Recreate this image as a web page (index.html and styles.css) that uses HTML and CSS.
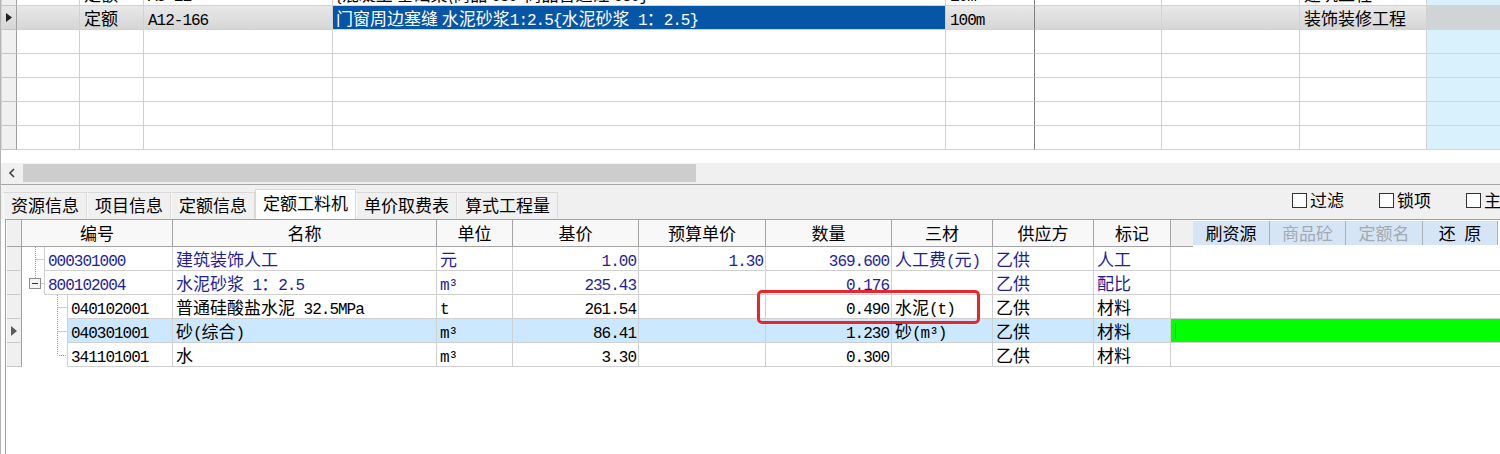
FILE: index.html
```html
<!DOCTYPE html>
<html lang="zh">
<head>
<meta charset="utf-8">
<link rel="stylesheet" href="styles.css">
</head>
<body>
<div class="app">
  <div class="top-grid">
    <div class="trow">
      <div class="ind"></div><div></div><div>定额</div><div><span class="m">A5-11</span></div>
      <div class="name">{混凝土 基础梁(商品 <span class="m">C30</span>&nbsp; 商品普通砼 <span class="m">C30}</span></div>
      <div class="frz"><span class="m">10m³</span></div><div></div><div></div><div>建筑工程</div><div class="blue"></div>
    </div>
    <div class="trow sel">
      <div class="ind"><svg width="6" height="9" viewBox="0 0 6 9"><path d="M0 0L6 4.5L0 9Z" fill="#202020"/></svg></div>
      <div></div><div>定额</div><div><span class="m">A12-166</span></div>
      <div class="name">门窗周边塞缝 水泥砂浆<span class="m">1:2.5{</span>水泥砂浆<span class="m"> 1</span>：<span class="m">2.5}</span></div>
      <div class="frz"><span class="m">100m</span></div><div></div><div></div><div>装饰装修工程</div><div class="blue"></div>
    </div>
    <div class="trow"><div class="ind"></div><div></div><div></div><div></div><div class="name"></div><div class="frz"></div><div></div><div></div><div></div><div class="blue"></div></div>
    <div class="trow"><div class="ind"></div><div></div><div></div><div></div><div class="name"></div><div class="frz"></div><div></div><div></div><div></div><div class="blue"></div></div>
    <div class="trow"><div class="ind"></div><div></div><div></div><div></div><div class="name"></div><div class="frz"></div><div></div><div></div><div></div><div class="blue"></div></div>
    <div class="trow"><div class="ind"></div><div></div><div></div><div></div><div class="name"></div><div class="frz"></div><div></div><div></div><div></div><div class="blue"></div></div>
    <div class="trow"><div class="ind"></div><div></div><div></div><div></div><div class="name"></div><div class="frz"></div><div></div><div></div><div></div><div class="blue"></div></div>
  </div>

  <div class="hscroll">
    <div class="arrow"><svg width="8" height="10" viewBox="0 0 8 10"><path d="M6 1L2 5L6 9" fill="none" stroke="#404040" stroke-width="1.6"/></svg></div>
    <div class="thumb"></div>
  </div>

  <div class="tabstrip">
    <div class="tabs">
      <div class="tab">资源信息</div>
      <div class="tab">项目信息</div>
      <div class="tab">定额信息</div>
      <div class="tab active">定额工料机</div>
      <div class="tab">单价取费表</div>
      <div class="tab">算式工程量</div>
    </div>
    <div class="checks">
      <label class="chk"><span class="box"></span>过滤</label>
      <label class="chk"><span class="box"></span>锁项</label>
      <label class="chk"><span class="box"></span>主材</label>
    </div>
  </div>

  <div class="panel">
    <div class="ghead">
      <div class="ind"></div>
      <div>编号</div><div>名称</div><div>单位</div><div>基价</div><div>预算单价</div><div>数量</div><div>三材</div><div>供应方</div><div>标记</div>
      <div class="blank"></div>
      <div class="btns">
        <div class="btn">刷资源</div>
        <div class="btn dis">商品砼</div>
        <div class="btn dis">定额名</div>
        <div class="btn">还&ensp;原</div>
      </div>
    </div>

    <div class="brow blue">
      <div class="ind"></div>
      <div class="codec"><svg class="tree" width="22" height="24" viewBox="0 0 22 24"><path d="M13.5 0V24M13.5 12.5H22" stroke="#9a9a9a" stroke-dasharray="1 1"/></svg><div class="code"><span class="m">000301000</span></div></div>
      <div>建筑装饰人工</div><div>元</div>
      <div class="r"><span class="m">1.00</span></div><div class="r"><span class="m">1.30</span></div><div class="r"><span class="m">369.600</span></div>
      <div>人工费<span class="m">(</span>元<span class="m">)</span></div><div>乙供</div><div>人工</div><div class="rest"></div>
    </div>
    <div class="brow blue">
      <div class="ind"></div>
      <div class="codec"><svg class="tree" width="22" height="24" viewBox="0 0 22 24"><path d="M13.5 0V7M18.5 12.5H22" stroke="#9a9a9a" stroke-dasharray="1 1"/><rect x="7.5" y="7.5" width="11" height="10" fill="#f4f4f4" stroke="#8c8c8c"/><path d="M10 12.5H16" stroke="#303030"/></svg><div class="code"><span class="m">800102004</span></div></div>
      <div>水泥砂浆<span class="m"> 1</span>：<span class="m">2.5</span></div><div><span class="m">m³</span></div>
      <div class="r"><span class="m">235.43</span></div><div class="r"></div><div class="r"><span class="m">0.176</span></div>
      <div></div><div>乙供</div><div>配比</div><div class="rest"></div>
    </div>
    <div class="brow">
      <div class="ind"></div>
      <div class="codec"><svg class="tree" width="45" height="24" viewBox="0 0 45 24"><path d="M35.5 0V24M35.5 12.5H45" stroke="#9a9a9a" stroke-dasharray="1 1"/></svg><div class="code"><span class="m">040102001</span></div></div>
      <div>普通硅酸盐水泥<span class="m"> 32.5MPa</span></div><div><span class="m">t</span></div>
      <div class="r"><span class="m">261.54</span></div><div class="r"></div><div class="r"><span class="m">0.490</span></div>
      <div>水泥<span class="m">(t)</span></div><div>乙供</div><div>材料</div><div class="rest"></div>
    </div>
    <div class="brow sel">
      <div class="ind"><svg width="6" height="10" viewBox="0 0 6 10"><path d="M0 0L6 5L0 10Z" fill="#5a5a5a"/></svg></div>
      <div class="codec"><svg class="tree" width="45" height="24" viewBox="0 0 45 24"><path d="M35.5 0V24M35.5 12.5H45" stroke="#9a9a9a" stroke-dasharray="1 1"/></svg><div class="code"><span class="m">040301001</span></div></div>
      <div>砂<span class="m">(</span>综合<span class="m">)</span></div><div><span class="m">m³</span></div>
      <div class="r"><span class="m">86.41</span></div><div class="r"></div><div class="r"><span class="m">1.230</span></div>
      <div>砂<span class="m">(m³)</span></div><div>乙供</div><div>材料</div><div class="rest green"><span class="caret"></span></div>
    </div>
    <div class="brow">
      <div class="ind"></div>
      <div class="codec"><svg class="tree" width="45" height="24" viewBox="0 0 45 24"><path d="M35.5 0V12.5H45" fill="none" stroke="#9a9a9a" stroke-dasharray="1 1"/></svg><div class="code"><span class="m">341101001</span></div></div>
      <div>水</div><div><span class="m">m³</span></div>
      <div class="r"><span class="m">3.30</span></div><div class="r"></div><div class="r"><span class="m">0.300</span></div>
      <div></div><div>乙供</div><div>材料</div><div class="rest"></div>
    </div>

    <div class="redbox"></div>
  </div>
</div>
</body>
</html>
```

FILE: styles.css
```css
* { box-sizing: border-box; margin: 0; padding: 0; }
html, body { width: 1500px; height: 454px; overflow: hidden; background: #fff; }
body {
  font-family: "Noto Sans CJK SC", "Liberation Sans", sans-serif;
  font-size: 17px;
  color: #000;
}
.m {
  font-family: "Liberation Mono", "DejaVu Sans Mono", monospace;
  font-size: 16px;
  letter-spacing: -1px;
}

.app {
  width: 1500px;
  height: 454px;
  border-left: 1px solid #b4b4b4;
  display: flex;
  flex-direction: column;
  overflow: hidden;
}

/* top grid */
.top-grid { margin-top: -18px; border-left: 1px solid #d6d6d6; flex: none; }
.trow {
  display: grid;
  grid-template-columns: 15px 63px 64px 189px 613px 89px 127px 138px 127px 1fr;
  height: 24px;
}
.trow > div {
  border-right: 1px solid #d2d2d2;
  border-bottom: 1px solid #d2d2d2;
  padding-left: 4px;
  line-height: 23px;
  white-space: nowrap;
  overflow: hidden;
}
.trow > .ind {
  background: #f0f0f0;
  border-right-color: #a0a0a0;
  border-bottom-color: #c4c4c4;
  padding: 0;
  display: flex;
  align-items: center;
  justify-content: center;
}
.trow > .name { padding-left: 3px; }
.trow > .frz { border-right-color: #7e7e7e; }
.trow > .blue { background: #d8f1fc; border-right: none; border-bottom-color: #c4dbe6; }
.trow.sel > div { background: linear-gradient(#e8e8e8, #d6d6d6); }
.trow.sel > .name { background: #0656a8; color: #fff; }
.trow.sel > .blue { background: #d0d4d7; }

/* scrollbar */
.hscroll {
  flex: none;
  margin-top: 13px;
  height: 22px;
  background: #f0f0f0;
  border-bottom: 1px solid #a6a6a6;
  display: flex;
  align-items: flex-start;
  padding-top: 1px;
}
.hscroll .arrow {
  width: 21px;
  height: 18px;
  display: flex;
  align-items: center;
  justify-content: center;
}
.hscroll .thumb { width: 673px; height: 18px; background: #cdcdcd; margin-left: 1px; }

/* tabs */
.tabstrip {
  flex: none;
  height: 34px;
  background: #f0f0f0;
  display: flex;
  align-items: flex-end;
  padding-left: 2px;
}
.tabs { display: flex; align-items: flex-end; }
.tab {
  height: 26px;
  margin-bottom: 1px;
  padding: 0 7px;
  line-height: 23px;
  border: 1px solid #d9d9d9;
  border-bottom: none;
  border-left-color: #fafafa;
  background: #f0f0f0;
  white-space: nowrap;
}
.tab.active {
  height: 30px;
  margin-bottom: 0;
  line-height: 26px;
  background: #fff;
  border-color: #d9d9d9;
}
.checks {
  margin-left: auto;
  margin-right: -18px;
  align-self: flex-start;
  margin-top: 6px;
  display: flex;
  gap: 35px;
}
.chk { display: flex; align-items: center; gap: 3px; line-height: 18px; white-space: nowrap; }
.chk .box { width: 15px; height: 15px; border: 1px solid #333; background: #fff; }

/* bottom panel */
.panel {
  flex: 1;
  position: relative;
  margin-left: 4px;
  border-left: 1px solid #a0a0a0;
  border-top: 1px solid #a0a0a0;
  padding-left: 1px;
}
.ghead {
  display: grid;
  grid-template-columns: 15px 151px 264px 76px 126px 127px 126px 101px 101px 77px 22px 1fr;
  height: 27px;
}
.ghead > div {
  background: #f8f8f8;
  border-right: 1px solid #a4a4a4;
  border-bottom: 1px solid #a4a4a4;
  text-align: center;
  line-height: 26px;
  white-space: nowrap;
}
.ghead > .ind { background: #f0f0f0; }
.ghead > .blank { background: #f0f0f0; border-right: none; }
.ghead > .btns {
  display: flex;
  border: none;
  background: #fff;
  padding: 1px 2px 1px 0;
}
.btn {
  width: 77px;
  flex: none;
  background: #d6e5f5;
  border-right: 1px solid #a8b0b8;
  text-align: center;
  line-height: 23px;
  height: 24px;
}
.btn:nth-child(2) { width: 76px; }
.btn:last-child { width: 75px; }
.btn.dis { color: #a2a9b1; }

.brow {
  display: grid;
  grid-template-columns: 15px 151px 264px 76px 126px 127px 126px 101px 101px 77px 1fr;
  height: 24px;
}
.brow > div {
  border-right: 1px solid #d0d0d0;
  border-bottom: 1px solid #d0d0d0;
  padding: 0 3px;
  line-height: 23px;
  white-space: nowrap;
  overflow: hidden;
}
.brow > .r { text-align: right; padding-right: 2px; }
.brow > .ind {
  background: #f0f0f0;
  border-right-color: #a0a0a0;
  border-bottom-color: #c8c8c8;
  padding: 0;
  display: flex;
  align-items: center;
  justify-content: center;
}
.brow > .codec { display: flex; padding: 0; border-bottom: none; }
.tree { flex: none; display: block; }
.code {
  flex: 1;
  border-left: 1px solid #d0d0d0;
  border-bottom: 1px solid #d0d0d0;
  padding-left: 3px;
  line-height: 23px;
}
.brow > .rest { border-right: none; }
.brow.blue { color: #1e1e9c; }
.brow.sel > div:not(.ind):not(.codec):not(.green) { background: #cce8ff; }
.brow.sel .code { background: #cce8ff; }
.brow > .green { background: #00ff00; display: flex; align-items: center; }
.caret { display: block; width: 1px; height: 16px; background: #a040b0; margin-left: 1px; }

.redbox {
  position: absolute;
  left: 751px;
  top: 70px;
  width: 223px;
  height: 34px;
  border: 3px solid #e8262b;
  border-radius: 5px;
}
```
